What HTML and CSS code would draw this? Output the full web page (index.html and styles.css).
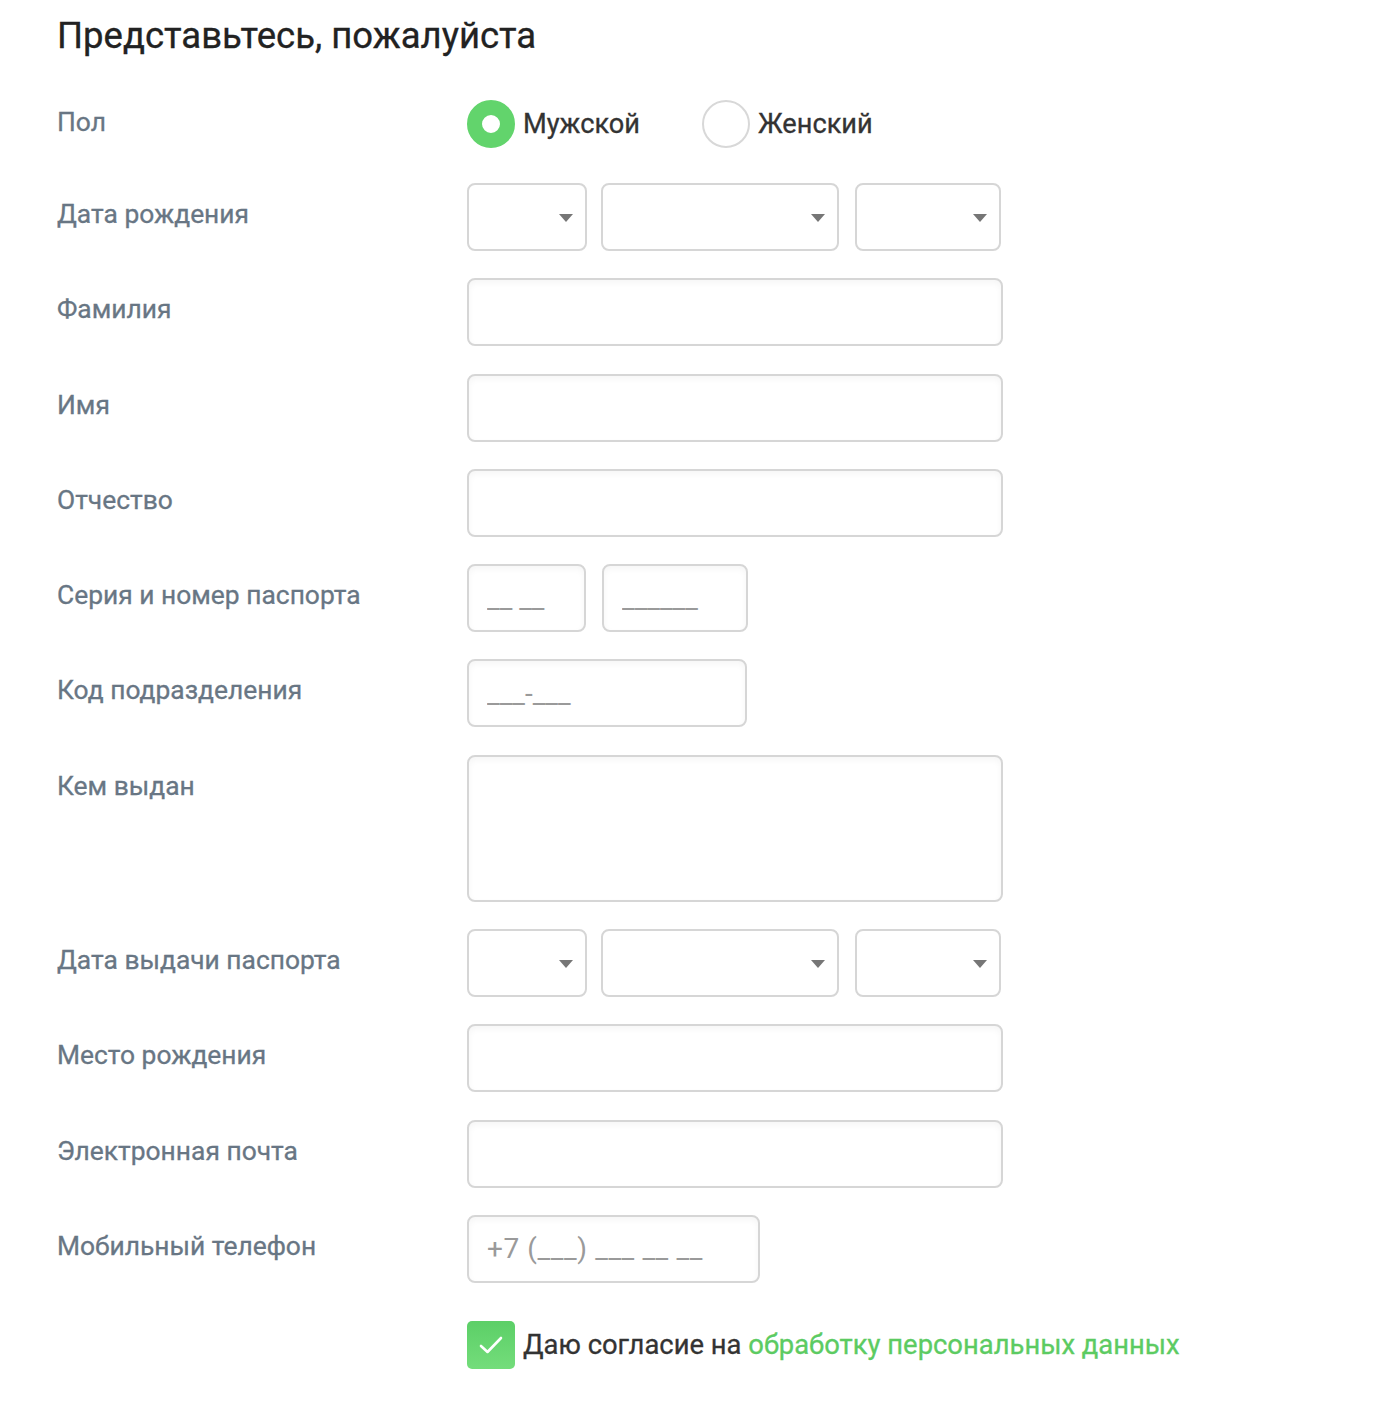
FILE: index.html
```html
<!DOCTYPE html>
<html lang="ru">
<head>
  <meta charset="UTF-8" />
  <meta name="viewport" content="width=device-width, initial-scale=1" />
  <title>Представьтесь, пожалуйста</title>
  <link rel="stylesheet" href="styles.css">
</head>
<body>
  <div class="anketa">
    <h1>Представьтесь, пожалуйста</h1>

    <form>
      <!-- Пол -->
      <div class="linha linha-radio">
        <div class="rotulo">Пол</div>
        <div class="campo">
          <label class="radio">
            <input type="radio" name="pol" checked />
            <span class="bolinha"></span>
            Мужской
          </label>
          <label class="radio">
            <input type="radio" name="pol" />
            <span class="bolinha"></span>
            Женский
          </label>
        </div>
      </div>

      <div class="linha">
        <div class="rotulo">Дата рождения</div>
        <div class="campo">
          <div class="sel sel-dia"></div>
          <div class="sel sel-mes"></div>
          <div class="sel sel-ano"></div>
        </div>
      </div>

      <div class="linha">
        <div class="rotulo">Фамилия</div>
        <div class="campo"><input type="text" class="caixa larga" /></div>
      </div>

      <div class="linha">
        <div class="rotulo">Имя</div>
        <div class="campo"><input type="text" class="caixa larga" /></div>
      </div>

      <div class="linha">
        <div class="rotulo">Отчество</div>
        <div class="campo"><input type="text" class="caixa larga" /></div>
      </div>

      <div class="linha">
        <div class="rotulo">Серия и номер паспорта</div>
        <div class="campo">
          <input type="text" class="caixa serie" placeholder="__ __" />
          <input type="text" class="caixa numero" placeholder="______" />
        </div>
      </div>

      <div class="linha">
        <div class="rotulo">Код подразделения</div>
        <div class="campo"><input type="text" class="caixa codigo" placeholder="___-___" /></div>
      </div>

      <div class="linha">
        <div class="rotulo">Кем выдан</div>
        <div class="campo"><textarea class="caixa larga area"></textarea></div>
      </div>

      <div class="linha">
        <div class="rotulo">Дата выдачи паспорта</div>
        <div class="campo">
          <div class="sel sel-dia"></div>
          <div class="sel sel-mes"></div>
          <div class="sel sel-ano"></div>
        </div>
      </div>

      <div class="linha">
        <div class="rotulo">Место рождения</div>
        <div class="campo"><input type="text" class="caixa larga" /></div>
      </div>

      <div class="linha">
        <div class="rotulo">Электронная почта</div>
        <div class="campo"><input type="text" class="caixa larga" /></div>
      </div>

      <div class="linha">
        <div class="rotulo">Мобильный телефон</div>
        <div class="campo"><input type="text" class="caixa telefone" placeholder="+7 (___) ___ __ __" /></div>
      </div>

      <!-- Согласие -->
      <div class="linha linha-check">
        <div class="rotulo"></div>
        <label class="check">
          <span class="quadrado">
            <svg width="26" height="20" viewBox="0 0 26 20"><path d="M3 11 L9.5 17 L23 3" fill="none" stroke="#fff" stroke-width="2.6" stroke-linecap="round" stroke-linejoin="round"/></svg>
          </span>
          <span>Даю согласие на <a href="#">обработку персональных данных</a></span>
        </label>
      </div>
    </form>
  </div>
</body>
</html>
```

FILE: styles.css
```css
* {
  margin: 0;
  padding: 0;
  box-sizing: border-box;
}
body {
  font-family: Roboto, "Noto Sans", Arial, sans-serif;
  background: #fff;
  color: #333;
}
.anketa {
  padding: 14px 0 40px 57px;
}
h1 {
  font-size: 36.5px;
  font-weight: 400;
  line-height: 44px;
  color: #222;
  margin-bottom: 42px;
  -webkit-text-stroke: 0.3px #222;
}
.linha {
  display: flex;
  align-items: flex-start;
  margin-bottom: 27.3px;
}
.rotulo {
  width: 410px;
  flex-shrink: 0;
  font-size: 26.4px;
  line-height: 30px;
  padding-top: 16px;
  color: #687684;
  -webkit-text-stroke: 0.3px #687684;
}
.campo {
  display: flex;
  gap: 16px;
}

/* radio */
.linha-radio {
  margin-bottom: 35px;
}
.linha-radio .rotulo {
  padding-top: 7px;
}
.linha-radio .campo {
  gap: 62px;
}
.radio {
  display: flex;
  align-items: center;
  gap: 8px;
  font-size: 27.2px;
  color: #333;
  -webkit-text-stroke: 0.3px #333;
  cursor: pointer;
}
.radio input,
.check input {
  display: none;
}
.bolinha {
  width: 48px;
  height: 48px;
  border-radius: 50%;
  border: 2px solid #d8d8d8;
  background: #fff;
}
.radio input:checked + .bolinha {
  border: 15px solid #62d46c;
  background: #fff;
}

/* campos */
.caixa,
.sel {
  height: 68px;
  border: 2px solid #d6d6d6;
  border-radius: 8px;
  background: #fff;
  box-shadow: inset 0 3px 6px rgb(0 0 0 / 0.04);
  font-family: inherit;
  font-size: 28px;
  color: #333;
  padding: 0 18px;
  outline: none;
}
.caixa::placeholder {
  color: #9a9a9a;
}
.larga {
  width: 536px;
}
.area {
  height: 147px;
  resize: none;
}
.serie {
  width: 119px;
}
.numero {
  width: 146px;
}
.codigo {
  width: 280px;
}
.telefone {
  width: 293px;
  letter-spacing: 0.6px;
}
.sel {
  position: relative;
  box-shadow: none;
}
.sel::after {
  content: "";
  position: absolute;
  right: 12px;
  top: 29px;
  border-left: 7px solid transparent;
  border-right: 7px solid transparent;
  border-top: 8px solid #767676;
}
.sel-dia {
  width: 120px;
}
.sel-mes {
  width: 238px;
  margin-left: -2px;
}
.sel-ano {
  width: 146px;
}

/* согласие */
.linha-check {
  margin-top: 35px;
  padding-top: 3px;
  align-items: center;
}
.check {
  display: flex;
  align-items: center;
  gap: 8px;
  font-size: 27.4px;
  color: #333;
  -webkit-text-stroke: 0.3px #333;
}
.quadrado {
  width: 48px;
  height: 48px;
  border-radius: 5px;
  background: linear-gradient(#5ccf67, #74dd7b);
  display: flex;
  align-items: center;
  justify-content: center;
}
.check a {
  color: #5ccb62;
  -webkit-text-stroke: 0.3px #5ccb62;
  text-decoration: none;
}
```
